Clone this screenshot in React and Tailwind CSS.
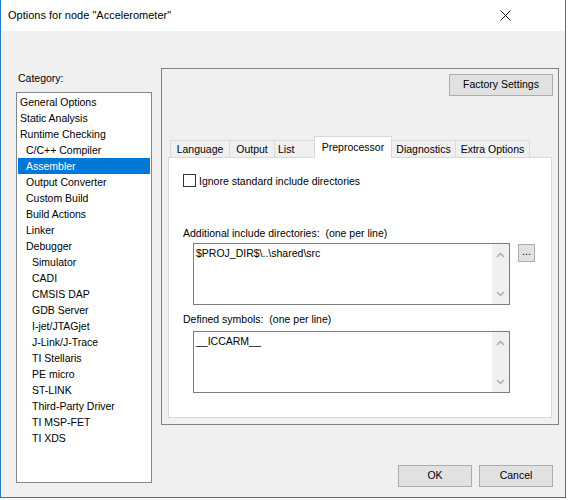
import React from "react";

const categories = [
  { label: "General Options", level: 0 },
  { label: "Static Analysis", level: 0 },
  { label: "Runtime Checking", level: 0 },
  { label: "C/C++ Compiler", level: 1 },
  { label: "Assembler", level: 1, selected: true },
  { label: "Output Converter", level: 1 },
  { label: "Custom Build", level: 1 },
  { label: "Build Actions", level: 1 },
  { label: "Linker", level: 1 },
  { label: "Debugger", level: 1 },
  { label: "Simulator", level: 2 },
  { label: "CADI", level: 2 },
  { label: "CMSIS DAP", level: 2 },
  { label: "GDB Server", level: 2 },
  { label: "I-jet/JTAGjet", level: 2 },
  { label: "J-Link/J-Trace", level: 2 },
  { label: "TI Stellaris", level: 2 },
  { label: "PE micro", level: 2 },
  { label: "ST-LINK", level: 2 },
  { label: "Third-Party Driver", level: 2 },
  { label: "TI MSP-FET", level: 2 },
  { label: "TI XDS", level: 2 },
];

const indent = ["pl-[2px]", "pl-[8px]", "pl-[14px]"];

const Chevron = ({ up }) => (
  <svg width="9" height="6" viewBox="0 0 9 6" className="block">
    <path
      d={up ? "M1 5 L4.5 1.5 L8 5" : "M1 1 L4.5 4.5 L8 1"}
      fill="none"
      stroke="#a6a6a6"
      strokeWidth="1.3"
    />
  </svg>
);

// multi-line edit box with disabled vertical scrollbar
const EditBox = ({ text }) => (
  <div className="w-[317px] h-[62px] border border-[#7a7a7a] bg-white flex">
    <div className="flex-1 pl-[2px] pt-[1px] leading-[16px]">{text}</div>
    <div className="w-[17px] bg-[#f0f0f0] flex flex-col items-center justify-between pt-[8px] pb-[7px]">
      <Chevron up />
      <Chevron />
    </div>
  </div>
);

const Tab = ({ label, className }) => (
  <div
    className={
      "h-[17px] bg-[#f0f0f0] border-t border-[#d9d9d9] flex items-center justify-center leading-[16px] " +
      className
    }
  >
    {label}
  </div>
);

const App = () => {
  return (
    <div
      className="w-[569px] h-[500px] bg-white text-black text-[10.5px] overflow-hidden"
      style={{ fontFamily: '"Liberation Sans", Arial, sans-serif' }}
    >
      <div className="w-[566px] h-[498px] border-x border-b border-[#1c7fd6] flex flex-col">
        {/* title bar */}
        <div className="h-[31px] bg-white flex items-center justify-between shrink-0">
          <span className="pl-[7px] text-[11px] pb-[1px]">
            Options for node "Accelerometer"
          </span>
          <svg width="11" height="11" viewBox="0 0 11 11" className="mr-[54px]">
            <path d="M0.5 0.5 L10.5 10.5 M10.5 0.5 L0.5 10.5" stroke="#111" strokeWidth="1" />
          </svg>
        </div>

        {/* body */}
        <div className="flex-1 bg-[#f0f0f0] flex">
          {/* category column */}
          <div className="pl-[15px] w-[151px] shrink-0">
            <div className="mt-[39px] leading-[16px] pl-[2px]">Category:</div>
            <div className="mt-[6px] w-[136px] h-[391px] border border-[#828790] bg-white py-[1px]">
              {categories.map((c) => (
                <div
                  key={c.label}
                  className={
                    "h-[16px] leading-[16px] mx-[1px] " +
                    indent[c.level] +
                    (c.selected ? " bg-[#0078d7] text-white" : "")
                  }
                >
                  {c.label}
                </div>
              ))}
            </div>
          </div>

          {/* options column */}
          <div className="ml-[9px] pt-[37px] w-[398px] shrink-0">
            <div className="h-[357px] border border-[#828282] px-[6px]">
              <div className="flex justify-end mt-[5px] -mr-px">
                <button className="w-[104px] h-[22px] bg-[#e1e1e1] border border-[#adadad]">
                  Factory Settings
                </button>
              </div>

              {/* tabs */}
              <div className="mt-[40px] h-[21px] flex items-end pl-[2px]">
                <Tab label="Language" className="w-[59px] border-l" />
                <Tab label="Output" className="w-[45px] border-l" />
                <Tab label="List" className="w-[40px] border-l justify-start pl-[3px]" />
                <div className="relative z-10 -mb-px w-[78px] h-[22px] bg-white border-x border-t border-[#d9d9d9] flex justify-center pt-[2px] leading-[16px]">
                  Preprocessor
                </div>
                <Tab label="Diagnostics" className="w-[63px]" />
                <Tab label="Extra Options" className="w-[75px] border-x" />
              </div>

              {/* tab page */}
              <div className="h-[261px] border border-[#d9d9d9] bg-white pl-[14px]">
                <div className="mt-[16px] flex items-center h-[13px]">
                  <div className="w-[13px] h-[13px] border border-[#333333] bg-white" />
                  <span className="ml-[3px] leading-[16px]">
                    Ignore standard include directories
                  </span>
                </div>

                <div className="mt-[38px] leading-[16px]">
                  Additional include directories:&nbsp; (one per line)
                </div>
                <div className="mt-[2px] flex items-start pl-[10px]">
                  <EditBox text={"$PROJ_DIR$\\..\\shared\\src"} />
                  <button className="ml-[8px] mt-[1px] w-[17px] h-[18px] bg-[#e1e1e1] border border-[#adadad] leading-[10px] pb-[4px]">
                    ...
                  </button>
                </div>

                <div className="mt-[6px] leading-[16px]">
                  Defined symbols:&nbsp; (one per line)
                </div>
                <div className="mt-[4px] pl-[10px]">
                  <EditBox text="__ICCARM__" />
                </div>
              </div>
            </div>

            {/* dialog buttons */}
            <div className="mt-[40px] flex justify-end gap-[7px] pr-[6px]">
              <button className="w-[74px] h-[22px] bg-[#e1e1e1] border border-[#adadad]">
                OK
              </button>
              <button className="w-[74px] h-[22px] bg-[#e1e1e1] border border-[#adadad]">
                Cancel
              </button>
            </div>
          </div>
        </div>
      </div>
    </div>
  );
};

export default App;
